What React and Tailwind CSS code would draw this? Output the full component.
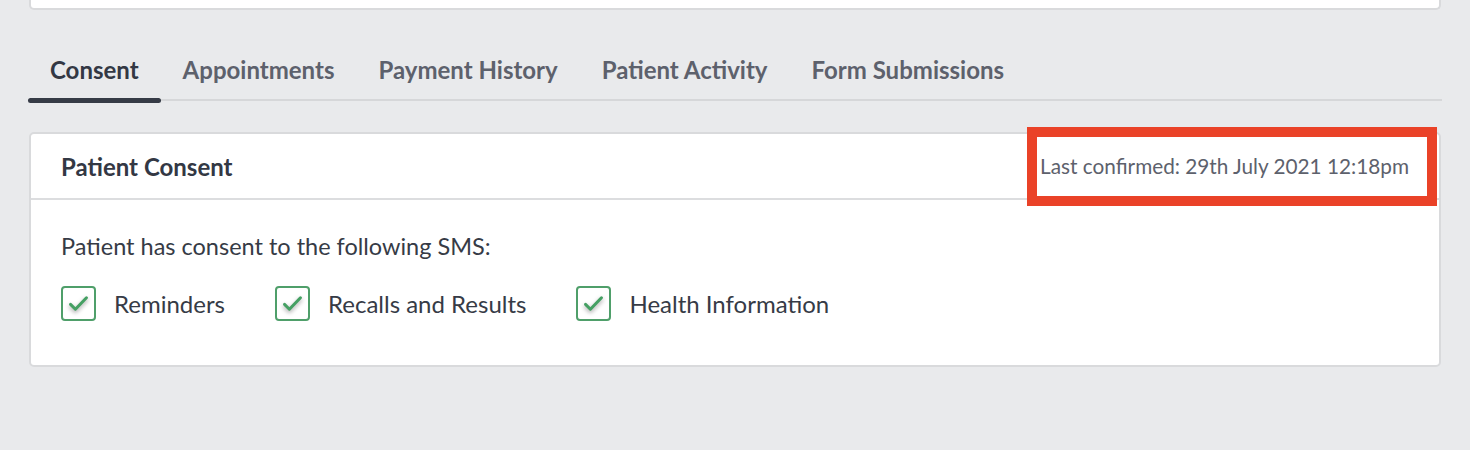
import React from 'react';

const tabs = ['Consent', 'Appointments', 'Payment History', 'Patient Activity', 'Form Submissions'];
const options = ['Reminders', 'Recalls and Results', 'Health Information'];

const CheckBox = () => (
  <span className="flex h-[35px] w-[35px] shrink-0 items-center justify-center rounded-[4px] border-2 border-[#4f9f6a] bg-white">
    <svg width="35" height="35" viewBox="0 0 35 35" className="drop-shadow-[0_2px_2px_rgba(0,0,0,0.35)]">
      <polyline
        points="8.5,18.5 14,24 26.5,11"
        fill="none"
        stroke="#45a063"
        strokeWidth="3.4"
        strokeLinecap="round"
        strokeLinejoin="round"
      />
    </svg>
  </span>
);

export default function App() {
  return (
    <div className="h-[450px] w-full bg-[#e9eaec] px-[28px] font-['Lato',sans-serif] text-[#363b46]">
      {/* bottom edge of the card above */}
      <div className="mx-px h-[10px] rounded-b-[5px] border-x-2 border-b-2 border-[#d9dadc] bg-white" />

      <div className="mt-[32px] flex border-b-2 border-[#d6d7d9]">
        {tabs.map((t, i) => (
          <div
            key={t}
            className={`relative flex h-[57px] items-center px-[22px] pb-[2px] text-[24px] font-bold ${
              i === 0 ? 'text-[#333844]' : 'text-[#5d616c]'
            }`}
          >
            {t}
            {i === 0 && (
              <span className="absolute bottom-[-4px] left-0 right-0 h-[5px] rounded-full bg-[#363b46]" />
            )}
          </div>
        ))}
      </div>

      <div className="relative mx-px mt-[31px] rounded-[5px] border-2 border-[#d9dadc] bg-white">
        <div className="flex h-[66px] items-center justify-between border-b-2 border-[#dcdddf] px-[30px] pt-px">
          <h2 className="text-[24px] font-bold text-[#333844]">Patient Consent</h2>
          <span className="text-[20.75px] text-[#5d616c]">Last confirmed: 29th July 2021 12:18pm</span>
        </div>

        <div className="px-[30px] pb-[44px] pt-[32px]">
          <p className="text-[23.5px] leading-[28px]">Patient has consent to the following SMS:</p>
          <div className="mt-[26px] flex items-center gap-[50px]">
            {options.map((o) => (
              <label key={o} className="flex items-center gap-[18px] text-[24px] leading-[35px]">
                <CheckBox />
                {o}
              </label>
            ))}
          </div>
        </div>

        {/* highlight annotation */}
        <div className="pointer-events-none absolute right-[2px] top-[-7px] h-[79px] w-[410px] border-[10px] border-[#ea4228]" />
      </div>
    </div>
  );
}
